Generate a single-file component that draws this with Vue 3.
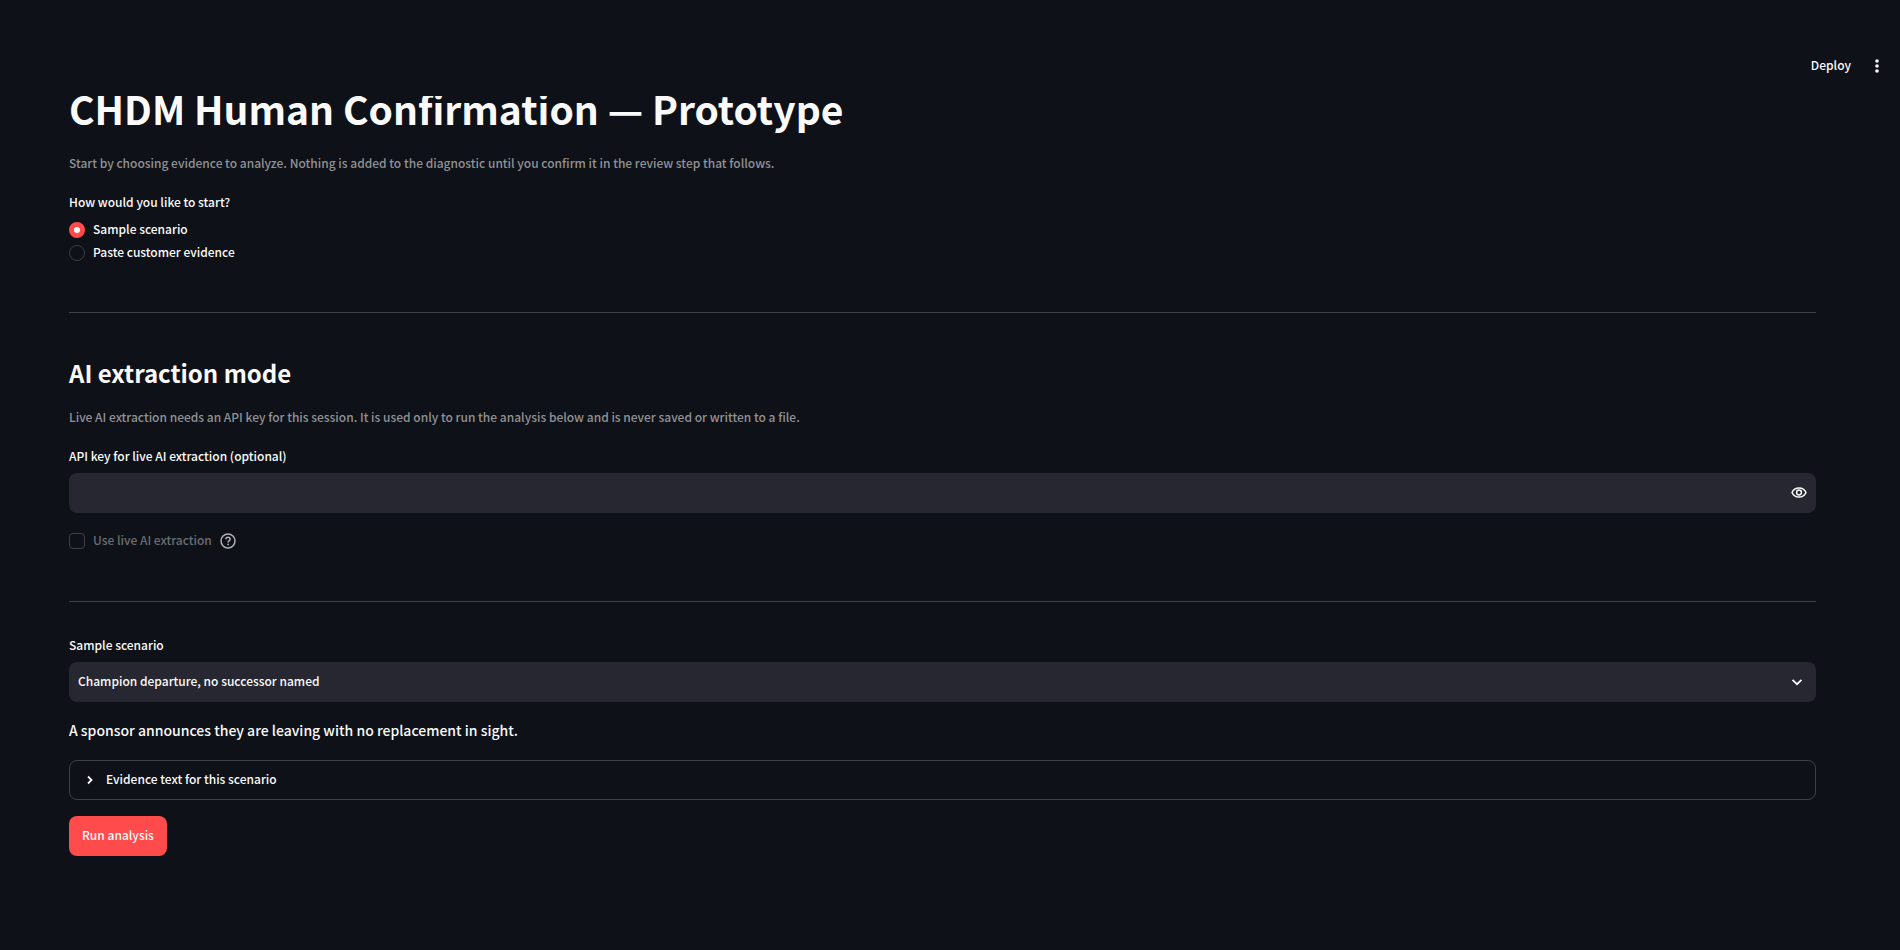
<script setup>
import { ref } from 'vue'

const startMode = ref('sample')
const apiKey = ref('')
const showKey = ref(false)
const scenario = ref('champion')
</script>

<template>
  <div class="app">
    <header class="toolbar">
      <button type="button" class="deploy">Deploy</button>
      <button type="button" class="icon-button" aria-label="Main menu">
        <svg width="20" height="20" viewBox="0 0 20 20" fill="currentColor" aria-hidden="true">
          <circle cx="10" cy="5" r="1.8" />
          <circle cx="10" cy="10" r="1.8" />
          <circle cx="10" cy="15" r="1.8" />
        </svg>
      </button>
    </header>

    <main class="content">
      <h1>CHDM Human Confirmation — Prototype</h1>
      <p class="caption">Start by choosing evidence to analyze. Nothing is added to the diagnostic until you confirm it in the review step that follows.</p>

      <fieldset class="radios">
        <legend>How would you like to start?</legend>
        <label class="choice">
          <input v-model="startMode" type="radio" name="start" value="sample" />
          <span>Sample scenario</span>
        </label>
        <label class="choice">
          <input v-model="startMode" type="radio" name="start" value="paste" />
          <span>Paste customer evidence</span>
        </label>
      </fieldset>

      <hr />

      <h2>AI extraction mode</h2>
      <p class="caption">Live AI extraction needs an API key for this session. It is used only to run the analysis below and is never saved or written to a file.</p>

      <div class="field">
        <label for="api-key">API key for live AI extraction (optional)</label>
        <div class="control">
          <input id="api-key" v-model="apiKey" :type="showKey ? 'text' : 'password'" autocomplete="off" />
          <button type="button" class="reveal" aria-label="Show password text" @click="showKey = !showKey">
            <svg width="16" height="16" viewBox="0 0 16 16" fill="none" stroke="currentColor" aria-hidden="true">
              <path d="M1 7.500C2.200 4.700 4.900 2.900 8 2.900S13.800 4.700 15 7.500C13.800 10.300 11.100 12.100 8 12.100S2.200 10.300 1 7.500Z" stroke-width="1.500" />
              <circle cx="8" cy="7.500" r="2.400" stroke-width="1.500" />
            </svg>
          </button>
        </div>
      </div>

      <div class="toggle">
        <label class="choice disabled">
          <input type="checkbox" disabled />
          <span>Use live AI extraction</span>
        </label>
        <button type="button" class="help" aria-label="Help for Use live AI extraction">
          <svg width="16" height="16" viewBox="0 0 16 16" fill="none" stroke="currentColor" stroke-width="1.500" aria-hidden="true">
            <circle cx="8" cy="8" r="7" />
            <path d="M5.900 6.300C5.900 5.100 6.800 4.300 8 4.300S10.100 5.100 10.100 6.200C10.100 7.500 8.100 7.700 8.100 9.400" />
            <circle cx="8.100" cy="11.400" r="0.900" fill="currentColor" stroke="none" />
          </svg>
        </button>
      </div>

      <hr />

      <div class="field">
        <label for="scenario">Sample scenario</label>
        <div class="control">
          <select id="scenario" v-model="scenario">
            <option value="champion">Champion departure, no successor named</option>
          </select>
          <svg class="chevron" width="16" height="16" viewBox="0 0 16 16" fill="none" stroke="currentColor" stroke-width="1.800" aria-hidden="true">
            <path d="M3.500 5.800L8 10.200L12.500 5.800" />
          </svg>
        </div>
      </div>

      <p class="description">A sponsor announces they are leaving with no replacement in sight.</p>

      <details class="expander">
        <summary>
          <svg width="16" height="16" viewBox="0 0 16 16" fill="none" stroke="currentColor" stroke-width="1.800" aria-hidden="true">
            <path d="M6 4.500L9.500 8L6 11.500" />
          </svg>
          <span>Evidence text for this scenario</span>
        </summary>
      </details>

      <button type="button" class="primary">Run analysis</button>
    </main>
  </div>
</template>

<style>
body {
  background: #0e1117;
}
</style>

<style scoped>
.app {
  min-height: 100vh;
  background: #0e1117;
  color: #fafafa;
  font-family: "Noto Sans CJK SC", "Noto Sans", sans-serif;
  font-size: 12px;
  font-weight: 500;
  line-height: 20px;
}

.app *,
.app *::before {
  box-sizing: border-box;
}

button,
input,
select {
  margin: 0;
  border: 0;
  background: transparent;
  color: inherit;
  font: inherit;
}

button {
  display: flex;
  align-items: center;
  justify-content: center;
  padding: 0;
  cursor: pointer;
}

/* Opaque bar that stays above the scrolling page */
.toolbar {
  position: fixed;
  top: 36px;
  left: 0;
  right: 0;
  z-index: 2;
  display: flex;
  align-items: center;
  justify-content: flex-end;
  gap: 16px;
  height: 60px;
  padding: 0 13px 0 16px;
  background: #0e1117;
}

.content {
  display: flex;
  flex-direction: column;
  padding: 82px 84px 94px 69px;
}

h1,
h2,
p {
  margin: 0;
}

h1 {
  font-size: 39px;
  font-weight: 700;
  line-height: 53px;
}

h2 {
  margin-bottom: 17px;
  font-size: 24px;
  font-weight: 600;
  line-height: 34px;
}

.caption {
  color: #909195;
}

h1 + .caption {
  margin-top: 18px;
}

.radios {
  display: flex;
  flex-direction: column;
  gap: 3px;
  margin: 19px 0 0;
  padding: 0;
  border: 0;
}

.radios legend {
  margin-bottom: 8px;
  padding: 0;
}

.choice {
  display: flex;
  align-items: center;
  gap: 8px;
  height: 20px;
}

.choice span,
.deploy,
summary span {
  padding-bottom: 2px;
  line-height: 18px;
}

.choice input {
  appearance: none;
  width: 16px;
  height: 16px;
  border: 1px solid #3e4044;
}

.choice input[type="radio"] {
  border-radius: 50%;
}

.choice input[type="radio"]:checked {
  border: 5px solid #ff4b4b;
  background: #ffffff;
}

.choice input[type="checkbox"] {
  border-radius: 4px;
}

.choice.disabled {
  color: #6b6d71;
}

hr {
  width: 100%;
  margin: 49px 0 0;
  border: 0;
  border-top: 1px solid #3e4044;
}

.toggle + hr {
  margin-top: 50px;
}

hr + h2 {
  margin-top: 43px;
}

hr + .field {
  margin-top: 33px;
}

.caption + .field {
  margin-top: 19px;
}

.field {
  display: flex;
  flex-direction: column;
  gap: 7px;
}

.control {
  position: relative;
  display: flex;
  align-items: center;
  height: 40px;
  border-radius: 8px;
  background: #262730;
}

.control input {
  flex: 1;
  height: 100%;
  padding: 0 9px;
  outline: 0;
}

.reveal {
  width: 34px;
  height: 40px;
}

.control select {
  flex: 1;
  appearance: none;
  height: 100%;
  padding: 0 40px 2px 9px;
  border-radius: 8px;
}

.chevron {
  position: absolute;
  right: 11px;
  pointer-events: none;
}

.toggle {
  display: flex;
  align-items: center;
  gap: 8px;
  margin-top: 18px;
}

.help {
  color: #b0b1b4;
}

.description {
  margin-top: 16px;
  font-size: 14px;
  line-height: 24px;
}

.expander {
  margin-top: 18px;
  border: 1px solid #3e4044;
  border-radius: 8px;
}

.expander summary {
  display: flex;
  align-items: center;
  gap: 8px;
  height: 38px;
  padding: 0 12px;
  list-style: none;
  cursor: pointer;
}

.primary {
  align-self: flex-start;
  height: 40px;
  margin-top: 16px;
  padding: 0 13px 2px;
  border-radius: 8px;
  background: #ff4b4b;
}
</style>
